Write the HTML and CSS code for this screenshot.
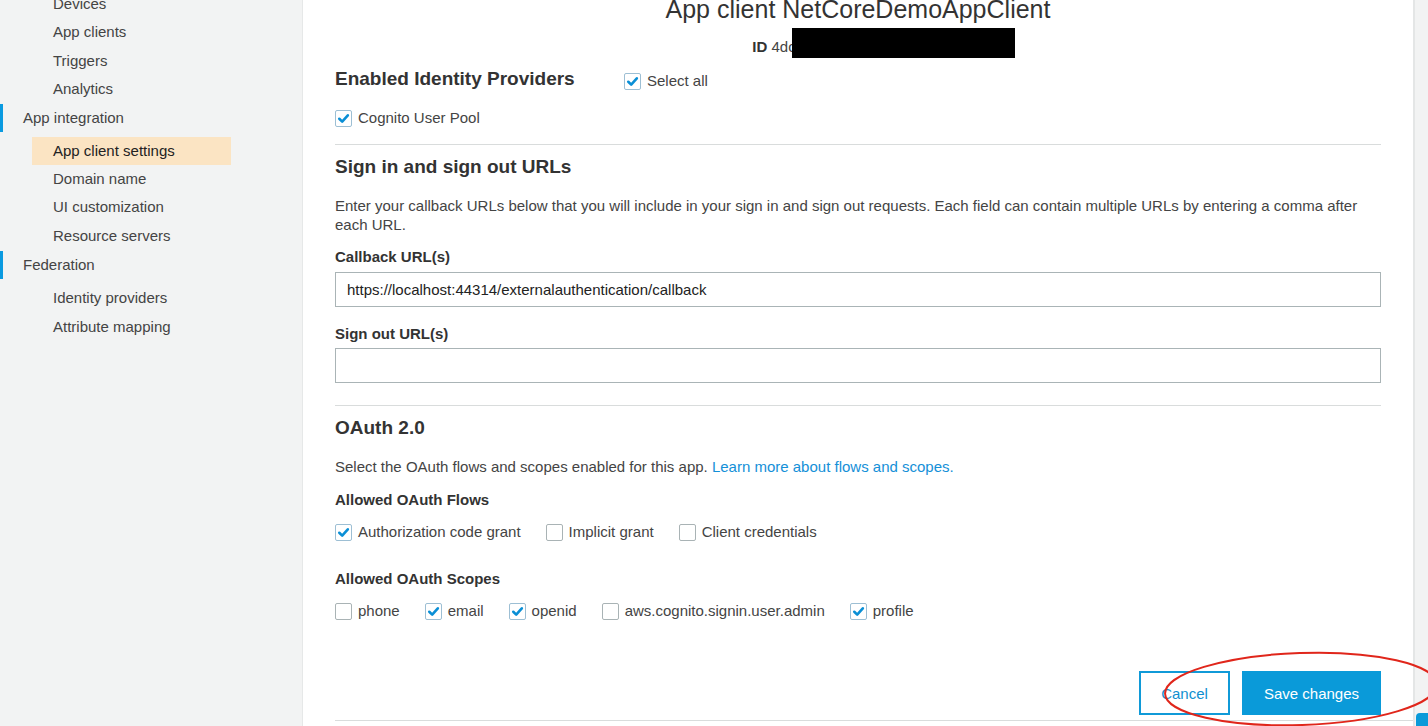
FILE: index.html
```html
<!DOCTYPE html>
<html>
<head>
<meta charset="utf-8">
<link rel="stylesheet" href="styles.css">
</head>
<body>
<div class="page">
  <nav class="sidebar">
    <div class="nav-sub">Devices</div>
    <div class="nav-sub">App clients</div>
    <div class="nav-sub">Triggers</div>
    <div class="nav-sub">Analytics</div>
    <div class="nav-group">App integration</div>
    <div class="nav-sub first active">App client settings</div>
    <div class="nav-sub">Domain name</div>
    <div class="nav-sub">UI customization</div>
    <div class="nav-sub">Resource servers</div>
    <div class="nav-group fed">Federation</div>
    <div class="nav-sub first">Identity providers</div>
    <div class="nav-sub">Attribute mapping</div>
  </nav>

  <main class="main">
    <h1 class="title">App client NetCoreDemoAppClient</h1>
    <div class="id-row"><b>ID</b>&nbsp;4dc<span class="redact"></span></div>

    <div class="idp-row">
      <h2 class="heading idp-heading">Enabled Identity Providers</h2>
      <label class="check select-all"><span class="cb on"><svg viewBox="0 0 16 16"><path d="M3.5 8.3 L6.6 11.3 L12.6 4.6"/></svg></span>Select all</label>
    </div>
    <div class="check-row cognito">
      <label class="check"><span class="cb on"><svg viewBox="0 0 16 16"><path d="M3.5 8.3 L6.6 11.3 L12.6 4.6"/></svg></span>Cognito User Pool</label>
    </div>

    <hr class="rule rule-1">

    <h2 class="heading signin-heading">Sign in and sign out URLs</h2>
    <p class="text desc">Enter your callback URLs below that you will include in your sign in and sign out requests. Each field can contain multiple URLs by entering a comma after each URL.</p>

    <div class="label cb-label">Callback URL(s)</div>
    <div class="input">https://localhost:44314/externalauthentication/callback</div>
    <div class="label so-label">Sign out URL(s)</div>
    <div class="input"></div>

    <hr class="rule rule-2">

    <h2 class="heading oauth-heading">OAuth 2.0</h2>
    <p class="text oauth-desc">Select the OAuth flows and scopes enabled for this app. <a class="link">Learn more about flows and scopes.</a></p>

    <div class="label flows-label">Allowed OAuth Flows</div>
    <div class="check-row flows">
      <label class="check"><span class="cb on"><svg viewBox="0 0 16 16"><path d="M3.5 8.3 L6.6 11.3 L12.6 4.6"/></svg></span>Authorization code grant</label>
      <label class="check"><span class="cb"></span>Implicit grant</label>
      <label class="check"><span class="cb"></span>Client credentials</label>
    </div>

    <div class="label scopes-label">Allowed OAuth Scopes</div>
    <div class="check-row scopes">
      <label class="check"><span class="cb"></span>phone</label>
      <label class="check"><span class="cb on"><svg viewBox="0 0 16 16"><path d="M3.5 8.3 L6.6 11.3 L12.6 4.6"/></svg></span>email</label>
      <label class="check"><span class="cb on"><svg viewBox="0 0 16 16"><path d="M3.5 8.3 L6.6 11.3 L12.6 4.6"/></svg></span>openid</label>
      <label class="check"><span class="cb"></span>aws.cognito.signin.user.admin</label>
      <label class="check"><span class="cb on"><svg viewBox="0 0 16 16"><path d="M3.5 8.3 L6.6 11.3 L12.6 4.6"/></svg></span>profile</label>
    </div>

    <div class="actions">
      <button class="btn btn-cancel">Cancel</button>
      <button class="btn btn-save">Save changes</button>
    </div>
    <hr class="rule rule-3">
  </main>

  <aside class="rightbar"><span class="corner"></span></aside>
</div>

<svg class="annotation" width="300" height="90" viewBox="0 0 300 90">
  <ellipse cx="137" cy="45" rx="136" ry="36" transform="rotate(-2 137 45)" fill="none" stroke="#e0261b" stroke-width="2"/>
</svg>
</body>
</html>
```

FILE: styles.css
```css
html, body {
  margin: 0;
  padding: 0;
  height: 726px;
  overflow: hidden;
  background: #ffffff;
  font-family: "Liberation Sans", Arial, Helvetica, sans-serif;
  color: #444;
}

.page {
  display: flex;
  height: 726px;
  position: relative;
}

/* Sidebar */
.sidebar {
  width: 302px;
  flex: none;
  background: #f2f3f3;
  border-right: 1px solid #e6e8e8;
  font-size: 15px;
  color: #444;
  margin-top: -10px;
}
.nav-sub {
  height: 28.4px;
  line-height: 28.4px;
  padding-left: 53px;
}
.nav-sub.first { margin-top: 5px; }
.nav-sub.active {
  background: #fbe4c3;
  margin-left: 32px;
  width: 199px;
  padding-left: 21px;
  box-sizing: border-box;
  color: #222;
}
.nav-group {
  height: 28px;
  line-height: 28px;
  border-left: 3px solid #0a9ae0;
  padding-left: 20px;
  color: #444;
}
.nav-group.fed { margin-top: 1px; }

/* Main */
.main {
  flex: 1;
  padding: 0 32px;
  min-width: 0;
  position: relative;
}
.title {
  margin: -5px 0 0 0;
  font-size: 25px;
  line-height: 28px;
  font-weight: normal;
  text-align: center;
  color: #333;
}
.id-row {
  margin-top: 10px;
  height: 20px;
  line-height: 20px;
  font-size: 15px;
  color: #444;
  text-align: center;
  padding-left: 51px;
}
.id-row b { color: #333; }
.redact {
  display: inline-block;
  width: 223px;
  height: 30px;
  background: #000;
  vertical-align: middle;
  margin-left: -4px;
  position: relative;
  top: -5px;
}

.heading {
  margin: 0;
  font-size: 19px;
  line-height: 24px;
  font-weight: bold;
  color: #333;
}
.idp-row {
  display: flex;
  align-items: center;
  margin-top: 14px;
  height: 24px;
}
.idp-heading { width: 289px; flex: none; }
.select-all { position: relative; top: 2px; }

.check-row {
  display: flex;
  align-items: center;
  height: 20px;
}
.cognito { margin-top: 17px; }

.check {
  display: inline-flex;
  align-items: center;
  font-size: 15px;
  line-height: 20px;
  color: #444;
  margin-right: 25px;
  white-space: nowrap;
}
.cb {
  width: 17px;
  height: 17px;
  box-sizing: border-box;
  border: 1px solid #a9b3b5;
  border-radius: 2px;
  background: #fff;
  margin-right: 6px;
  display: inline-block;
  flex: none;
}
.cb.on { border-color: #9dbfd4; }
.cb svg {
  display: block;
  width: 15px;
  height: 15px;
}
.cb svg path {
  fill: none;
  stroke: #0a8fd6;
  stroke-width: 2.8;
  stroke-linecap: round;
  stroke-linejoin: round;
}

.rule {
  border: 0;
  border-top: 1px solid #d9dcdc;
  margin: 0;
}
.rule-1 { margin-top: 16px; }
.signin-heading { margin-top: 10px; }

.text {
  margin: 0;
  font-size: 15px;
  line-height: 19px;
  color: #444;
}
.desc { margin-top: 17px; }

.label {
  font-size: 15px;
  line-height: 20px;
  font-weight: bold;
  color: #333;
}
.cb-label { margin-top: 13px; }
.so-label { margin-top: 17px; }

.input {
  margin-top: 5px;
  height: 35px;
  box-sizing: border-box;
  border: 1px solid #aab4b6;
  font-size: 15px;
  line-height: 33px;
  padding-left: 11px;
  color: #222;
}
.so-label + .input { margin-top: 4px; }

.rule-2 { margin-top: 22px; }
.oauth-heading { margin-top: 10px; }
.oauth-desc { margin-top: 17px; }
.link { color: #1490d8; text-decoration: none; cursor: pointer; }

.flows-label { margin-top: 14px; }
.flows { margin-top: 12px; }
.scopes-label { margin-top: 27px; }
.scopes { margin-top: 12px; }

.actions {
  display: flex;
  justify-content: flex-end;
  gap: 12px;
  margin-top: 50px;
}
.btn {
  height: 44px;
  font-family: "Liberation Sans", Arial, Helvetica, sans-serif;
  font-size: 15px;
  box-sizing: border-box;
  border-radius: 0;
  cursor: pointer;
}
.btn-cancel {
  width: 91px;
  background: #fff;
  border: 2px solid #109ad8;
  color: #0f8fd0;
}
.btn-save {
  width: 139px;
  background: #0a9ad9;
  border: 1px solid #0a9ad9;
  color: #fff;
}
.rule-3 { margin-top: 5px; margin-right: -32px; }

/* right strip */
.rightbar {
  width: 13px;
  flex: none;
  background: #f2f3f3;
  border-left: 2px solid #e4e6e6;
  position: relative;
}
.corner {
  position: absolute;
  left: 1px;
  top: 713px;
  width: 20px;
  height: 20px;
  background: #0a9ad9;
  border-radius: 4px 0 0 0;
}

.annotation {
  position: absolute;
  left: 1164px;
  top: 644px;
  overflow: visible;
  pointer-events: none;
}
```
